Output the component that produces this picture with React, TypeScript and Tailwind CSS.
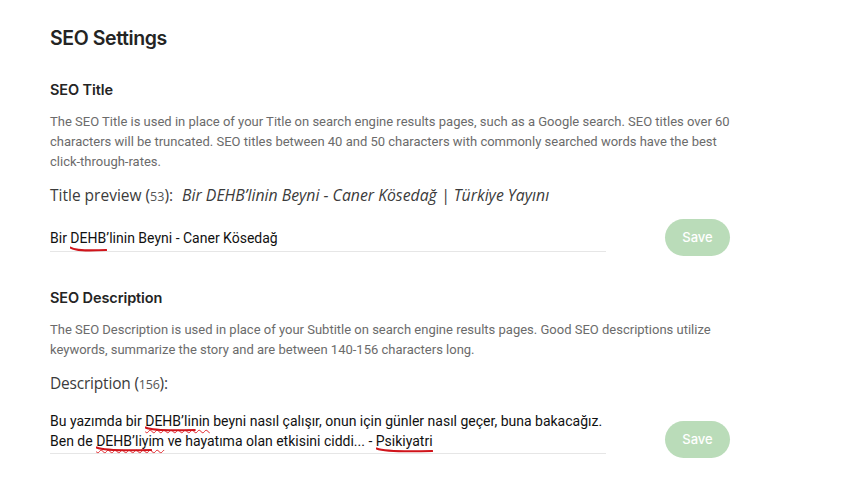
import React from "react";

const sans = { fontFamily: "Inter, 'Liberation Sans', sans-serif" };
const body = { fontFamily: "Roboto, 'Liberation Sans', sans-serif" };
const preview = { fontFamily: "'Open Sans', 'Noto Sans', sans-serif" };

// Hand-drawn red marker stroke under a word
function Marked({ children, w = "100%", bottom = -5 }: { children: React.ReactNode; w?: string; bottom?: number }) {
  return (
    <span className="relative">
      {children}
      <svg
        className="absolute left-0 pointer-events-none"
        style={{ bottom, width: w }}
        height="6"
        viewBox="0 0 100 6"
        preserveAspectRatio="none"
      >
        <path d="M1 1.5 C 15 4.5, 40 5, 99 4" stroke="#d0141b" strokeWidth="2" fill="none" strokeLinecap="round" vectorEffect="non-scaling-stroke" />
      </svg>
    </span>
  );
}

function Wavy({ children }: { children: React.ReactNode }) {
  return (
    <span className="underline decoration-wavy decoration-[#e0262b] decoration-1 underline-offset-[3px]">{children}</span>
  );
}

function SaveButton({ className = "" }: { className?: string }) {
  return (
    <button
      className={`shrink-0 ml-[59px] w-[65px] h-[37px] rounded-full bg-[#badcb9] text-white text-[13px] font-medium ${className}`}
      style={sans}
    >
      Save
    </button>
  );
}

export default function App() {
  return (
    <div className="w-[848px] h-[503px] bg-white px-[50px] pt-[24px] text-[#242424]" style={sans}>
      <h1 className="text-[19.5px] leading-[28px] font-semibold tracking-[-0.4px]">SEO Settings</h1>

      <h2 className="mt-[28px] text-[14.5px] leading-[20px] font-semibold tracking-[-0.1px]">SEO Title</h2>
      <p className="mt-[12px] w-[690px] text-[13px] leading-[20px] text-[#6b6b6b]" style={body}>
        The SEO Title is used in place of your Title on search engine results pages, such as a Google search. SEO titles over 60
        characters will be truncated. SEO titles between 40 and 50 characters with commonly searched words have the best
        click-through-rates.
      </p>
      <div className="mt-[11px] text-[15.5px] leading-[24px] text-[#3b3b3b] whitespace-nowrap" style={preview}>
        Title preview (<span className="text-[12.5px] text-[#555]">53</span>):
        <span className="ml-[9px] italic text-[15.8px] text-[#3b3b3b]">Bir DEHB’linin Beyni - Caner Kösedağ | Türkiye Yayını</span>
      </div>

      <div className="mt-[10px] flex items-start">
        <div className="w-[556px] pt-[9px] pb-[3px] border-b border-[#e6e6e6] text-[14px] leading-[20px] text-[#111]" style={body}>
          Bir <Marked w="80%" bottom={-6}>DEHB’li</Marked>nin Beyni - Caner Kösedağ
        </div>
        <SaveButton />
      </div>

      <h2 className="mt-[32px] text-[14.5px] leading-[20px] font-semibold tracking-[-0.1px]">SEO Description</h2>
      <p className="mt-[12px] w-[690px] text-[13px] leading-[20px] text-[#6b6b6b]" style={body}>
        The SEO Description is used in place of your Subtitle on search engine results pages. Good SEO descriptions utilize
        keywords, summarize the story and are between 140-156 characters long.
      </p>
      <div className="mt-[11px] text-[15.5px] leading-[24px] text-[#3b3b3b] tracking-[-0.2px]" style={preview}>
        Description (<span className="text-[12.5px] text-[#555]">156</span>):
      </div>

      <div className="mt-[15px] flex items-start">
        <div className="w-[556px] pb-[2px] border-b border-[#e6e6e6] text-[14px] leading-[19.5px] text-[#111] whitespace-nowrap" style={body}>
          Bu yazımda bir <Wavy><Marked w="78%" bottom={-3}>DEHB’linin</Marked></Wavy> beyni nasıl çalışır, onun için günler nasıl geçer, buna bakacağız.
          <br />
          Ben de <Wavy><Marked w="82%" bottom={-3}>DEHB’liyim</Marked></Wavy> ve hayatıma olan etkisini ciddi... - <Marked bottom={-4}>Psikiyatri</Marked>
        </div>
        <SaveButton className="mt-[9px]" />
      </div>
    </div>
  );
}
